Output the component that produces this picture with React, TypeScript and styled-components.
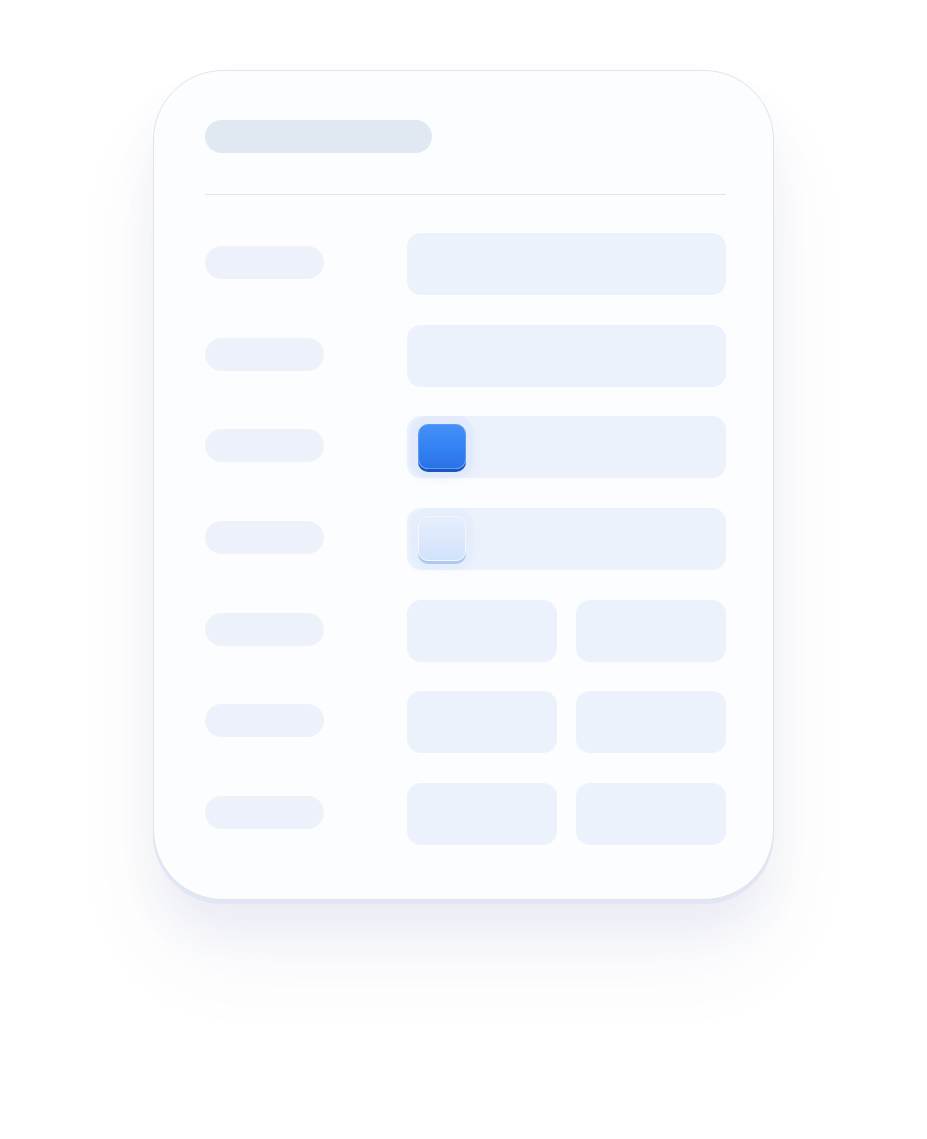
import React from "react";
import styled, { createGlobalStyle } from "styled-components";

const GlobalStyle = createGlobalStyle`
  body {
    margin: 0;
    background: #ffffff;
    font-family: "Inter", "Liberation Sans", sans-serif;
  }
`;

type RowKind = "input" | "checked" | "unchecked" | "pair";

const rows: RowKind[] = [
  "input",
  "input",
  "checked",
  "unchecked",
  "pair",
  "pair",
  "pair",
];

const App: React.FC = () => {
  return (
    <Page>
      <GlobalStyle />
      <Card>
        <Title />
        <Divider />
        <Rows>
          {rows.map((kind, i) => (
            <Row key={i}>
              <Label />
              {kind === "pair" ? (
                <Pair>
                  <Field />
                  <Field />
                </Pair>
              ) : (
                <Field>
                  {kind === "checked" && <Check $checked />}
                  {kind === "unchecked" && <Check />}
                </Field>
              )}
            </Row>
          ))}
        </Rows>
      </Card>
    </Page>
  );
};

const Page = styled.div`
  display: flex;
  justify-content: center;
  padding-top: 70px;
  height: 1139px;
  box-sizing: border-box;
`;

const Card = styled.div`
  width: 621px;
  height: 830px;
  box-sizing: border-box;
  padding: 49px 47px 0 51px;
  background: #fcfdff;
  border: 1px solid #dde3f1;
  border-radius: 70px;
  box-shadow: 0 4px 0 #e1e6f2, 0 30px 40px rgba(60, 80, 150, 0.06),
    0 60px 90px rgba(60, 90, 170, 0.06);
`;

const Title = styled.div`
  width: 227px;
  height: 33px;
  border-radius: 17px;
  background: #e0e8f2;
`;

const Divider = styled.div`
  height: 1px;
  margin-top: 41px;
  background: #dbe5f3;
`;

const Rows = styled.div`
  display: flex;
  flex-direction: column;
  gap: 29.7px;
  margin-top: 38px;
`;

const Row = styled.div`
  display: grid;
  grid-template-columns: 119px 1fr;
  column-gap: 83px;
  align-items: start;
`;

const Label = styled.div`
  height: 33px;
  margin-top: 13px;
  border-radius: 17px;
  background: #edf2fa;
`;

const Pair = styled.div`
  display: grid;
  grid-template-columns: 1fr 1fr;
  gap: 19px;
`;

const Field = styled.div`
  height: 62px;
  border-radius: 14px;
  background: #ecf2fc;
  display: flex;
  align-items: center;
  padding-left: 11px;
`;

const Check = styled.div<{ $checked?: boolean }>`
  width: 48px;
  height: 45px;
  margin-top: -2px;
  border-radius: 10px;
  box-sizing: border-box;
  background: ${(p) =>
    p.$checked
      ? "linear-gradient(180deg, #4590f8 0%, #3282f3 55%, #2a72e6 100%)"
      : "linear-gradient(180deg, #e4eefd 0%, #d3e2fb 100%)"};
  border: 1px solid ${(p) => (p.$checked ? "#5a9bf7" : "#f1f6ff")};
  box-shadow: ${(p) =>
    p.$checked
      ? "0 3px 0 #1c56c4, 0 0 0 8px rgba(224, 234, 250, 0.8), 0 4px 14px rgba(59, 130, 246, 0.25)"
      : "0 3px 0 #aec8f2, 0 0 0 8px rgba(228, 237, 251, 0.8), 0 4px 14px rgba(100, 150, 230, 0.15)"};
`;

export default App;
